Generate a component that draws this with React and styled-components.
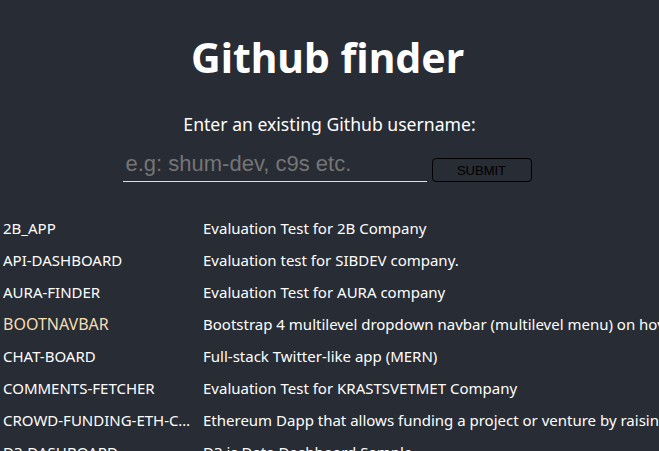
import React, { useState } from "react";
import styled, { createGlobalStyle } from "styled-components";

const GlobalStyle = createGlobalStyle`
  html, body {
    margin: 0;
    padding: 0;
    background: #282c34;
    overflow: hidden;
  }
  body {
    font-family: "Noto Sans", "Open Sans", sans-serif;
    color: #fff;
  }
`;

const Page = styled.div`
  min-height: 100vh;
  background: #282c34;
  display: flex;
  flex-direction: column;
  align-items: center;
`;

const Title = styled.h1`
  margin: 30px 0 0;
  font-size: 41px;
  font-weight: 700;
  line-height: 54px;
  margin-left: -4px;
`;

const Prompt = styled.p`
  margin: 28px 0 0;
  font-size: 17.6px;
  line-height: 24px;
`;

const Form = styled.form`
  display: flex;
  align-items: flex-end;
  gap: 5px;
  margin-top: 16px;
  margin-left: -5px;
`;

const Field = styled.input`
  width: 304px;
  height: 30px;
  box-sizing: border-box;
  padding: 0 3px 5px;
  background: transparent;
  border: none;
  border-bottom: 1px solid #f5deb3;
  outline: none;
  font-family: "Liberation Sans", Arial, sans-serif;
  font-size: 22px;
  color: #fff;
  &::placeholder {
    color: #757575;
  }
`;

const Submit = styled.button`
  width: 100px;
  height: 24px;
  margin-bottom: 0;
  box-sizing: border-box;
  background: transparent;
  border: 1px solid #000;
  border-radius: 4px;
  font-family: "Liberation Sans", Arial, sans-serif;
  font-size: 13px;
  color: #000;
  cursor: pointer;
`;

const List = styled.ul`
  list-style: none;
  margin: 30px 0 0;
  padding: 0 0 0 3px;
  align-self: stretch;
`;

const Row = styled.li`
  display: grid;
  grid-template-columns: 200px max-content;
  height: 32px;
  align-items: center;
  font-size: 15px;
  white-space: nowrap;
`;

const Name = styled.span`
  overflow: hidden;
  text-overflow: ellipsis;
  padding-right: 3px;
  color: ${(p) => (p.$active ? "#f5deb3" : "#fff")};
  font-size: ${(p) => (p.$active ? "16px" : "15px")};
  cursor: pointer;
`;

const Desc = styled.span`
  color: #fff;
`;

const repos = [
  ["2B_APP", "Evaluation Test for 2B Company"],
  ["API-DASHBOARD", "Evaluation test for SIBDEV company."],
  ["AURA-FINDER", "Evaluation Test for AURA company"],
  ["BOOTNAVBAR", "Bootstrap 4 multilevel dropdown navbar (multilevel menu) on hover"],
  ["CHAT-BOARD", "Full-stack Twitter-like app (MERN)"],
  ["COMMENTS-FETCHER", "Evaluation Test for KRASTSVETMET Company"],
  ["CROWD-FUNDING-ETH-CONTRACT", "Ethereum Dapp that allows funding a project or venture by raising money"],
  ["D3-DASHBOARD", "D3.js Data Dashboard Sample"],
];

export default function App() {
  const [user, setUser] = useState("");
  const [hovered, setHovered] = useState("BOOTNAVBAR");

  return (
    <>
      <GlobalStyle />
      <Page>
        <Title>Github finder</Title>
        <Prompt>Enter an existing Github username:</Prompt>
        <Form onSubmit={(e) => e.preventDefault()}>
          <Field
            placeholder="e.g: shum-dev, c9s etc."
            value={user}
            onChange={(e) => setUser(e.target.value)}
          />
          <Submit type="submit">SUBMIT</Submit>
        </Form>
        <List>
          {repos.map(([name, desc]) => (
            <Row key={name}>
              <Name
                $active={hovered === name}
                onMouseEnter={() => setHovered(name)}
              >
                {name}
              </Name>
              <Desc>{desc}</Desc>
            </Row>
          ))}
        </List>
      </Page>
    </>
  );
}
